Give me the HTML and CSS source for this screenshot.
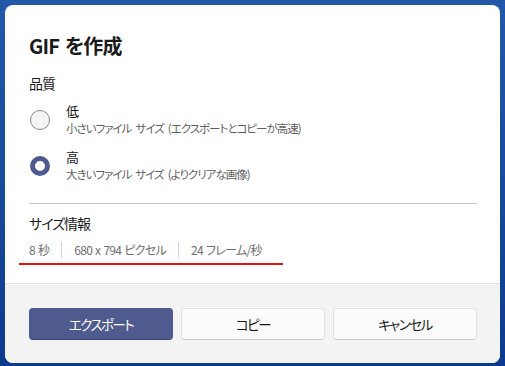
FILE: index.html
```html
<!DOCTYPE html>
<html lang="ja">
  <head>
    <meta charset="UTF-8" />
    <meta name="viewport" content="width=device-width, initial-scale=1.0" />
    <title>GIF を作成</title>
    <link rel="stylesheet" href="styles.css">
  </head>
  <body>
    <div class="dialog">
      <div class="content">
        <div class="title">GIF を作成</div>
        <div class="section-title">品質</div>

        <div class="option">
          <span class="radio"></span>
          <div class="option-text">
            <div class="option-label">低</div>
            <div class="option-desc">小さいファイル サイズ (エクスポートとコピーが高速)</div>
          </div>
        </div>

        <div class="option">
          <span class="radio checked"></span>
          <div class="option-text">
            <div class="option-label">高</div>
            <div class="option-desc">大きいファイル サイズ (よりクリアな画像)</div>
          </div>
        </div>

        <div class="divider"></div>

        <div class="section-title">サイズ情報</div>
        <div class="info-row">
          <span class="info-item">8 秒</span>
          <span class="info-item">680 x 794 ピクセル</span>
          <span class="info-item">24 フレーム/秒</span>
        </div>
        <div class="red-mark"></div>
      </div>

      <div class="footer">
        <button class="btn primary">エクスポート</button>
        <button class="btn">コピー</button>
        <button class="btn">キャンセル</button>
      </div>
    </div>
  </body>
</html>
```

FILE: styles.css
```css
body {
  margin: 0;
  padding: 5px;
  width: 505px;
  height: 366px;
  box-sizing: border-box;
  background: linear-gradient(180deg, #2358a8 0%, #16479b 60%, #0c3a8d 100%);
  font-family: "Noto Sans CJK JP", sans-serif;
  font-feature-settings: "palt";
  overflow: hidden;
}

.dialog {
  width: 495px;
  height: 358px;
  background: white;
  border-radius: 8px;
  overflow: hidden;
  display: flex;
  flex-direction: column;
}

.content {
  flex: 1;
  padding: 27px 23px 0 24px;
}

.title {
  font-size: 20px;
  font-weight: 600;
  color: #1b1b1b;
  line-height: 28px;
  letter-spacing: -0.8px;
  word-spacing: 2px;
}

.section-title {
  font-size: 14px;
  color: #1b1b1b;
  line-height: 20px;
  margin-top: 13px;
  letter-spacing: -1px;
}

.option {
  display: flex;
  align-items: center;
  margin-top: 9px;
}

.option + .option {
  margin-top: 11px;
}

.radio {
  width: 18px;
  height: 18px;
  border: 1px solid #8a8a8a;
  border-radius: 50%;
  background: #f6f6f6;
  margin-left: 1px;
  margin-right: 16px;
  flex-shrink: 0;
}

.radio.checked {
  width: 10px;
  height: 10px;
  border: 5px solid #4f5a8e;
  background: white;
}

.option-label {
  font-size: 13px;
  color: #1b1b1b;
  line-height: 18px;
}

.option-desc {
  font-size: 11.5px;
  color: #5f5f5f;
  line-height: 17px;
  letter-spacing: -1px;
  word-spacing: 2.5px;
}

.divider {
  height: 1px;
  background: #cacaca;
  margin-top: 20px;
}

.divider + .section-title {
  margin-top: 9px;
}

.info-row {
  display: flex;
  align-items: center;
  margin-top: 9px;
}

.info-item {
  font-size: 12px;
  color: #6e6e6e;
  line-height: 16px;
  padding: 0 12px;
  border-left: 1px solid #d2d2d2;
  letter-spacing: -0.7px;
  word-spacing: 1px;
}

.info-item:first-child {
  padding-left: 0;
  border-left: none;
}

.red-mark {
  width: 264px;
  height: 2px;
  background: #e81010;
  margin: 5px 0 0 -10px;
}

.footer {
  height: 80px;
  box-sizing: border-box;
  background: #f3f3f3;
  border-top: 1px solid #e2e2e2;
  padding: 24px 23px 0 24px;
  display: flex;
  gap: 8px;
}

.btn {
  width: 144px;
  height: 32px;
  border: 1px solid #e2e2e2;
  border-bottom-color: #cfcfcf;
  border-radius: 4px;
  background: #fbfbfb;
  font-family: inherit;
  font-feature-settings: "palt";
  font-size: 13.5px;
  letter-spacing: -1.5px;
  color: #1b1b1b;
  padding: 0;
}

.btn.primary {
  background: #4f5a8e;
  border-color: #4f5a8e;
  border-bottom-color: #3a4470;
  color: white;
}
```
